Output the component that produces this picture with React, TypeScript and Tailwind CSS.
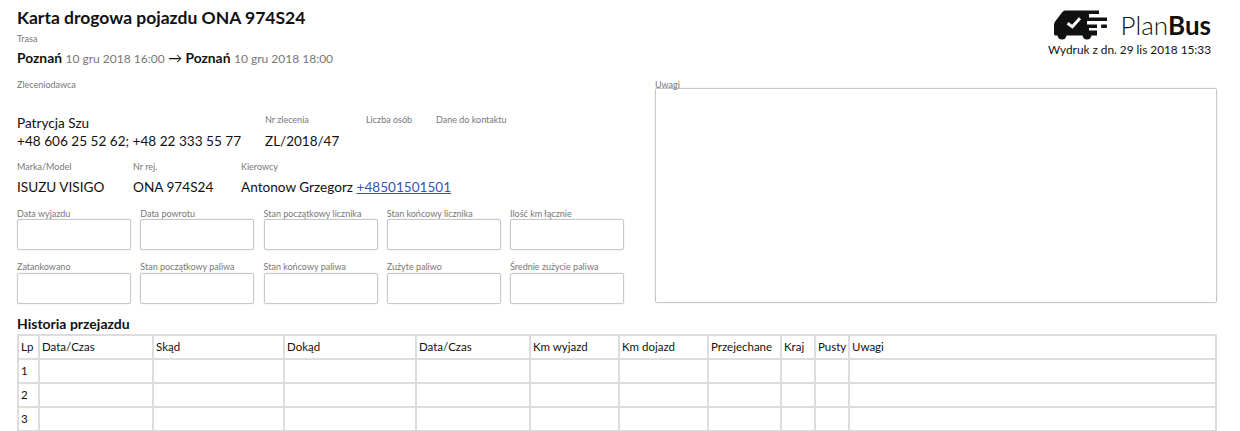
const columns = [
  { label: "Lp", width: "w-[21px]" },
  { label: "Data/Czas", width: "w-[114px]" },
  { label: "Skąd", width: "w-[131px]" },
  { label: "Dokąd", width: "w-[132px]" },
  { label: "Data/Czas", width: "w-[114px]" },
  { label: "Km wyjazd", width: "w-[89px]" },
  { label: "Km dojazd", width: "w-[89px]" },
  { label: "Przejechane", width: "w-[73px]" },
  { label: "Kraj", width: "w-[34px]" },
  { label: "Pusty", width: "w-[34px]" },
  { label: "Uwagi", width: "" },
];

const topFields = [
  "Data wyjazdu",
  "Data powrotu",
  "Stan początkowy licznika",
  "Stan końcowy licznika",
  "Ilość km łącznie",
];

const bottomFields = [
  "Zatankowano",
  "Stan początkowy paliwa",
  "Stan końcowy paliwa",
  "Zużyte paliwo",
  "Średnie zużycie paliwa",
];

function Logo() {
  return (
    <svg width="54" height="30" viewBox="0 0 54 30" className="block">
      <path
        d="M11 0.500 H45 V4 H35 V7.500 H53 V11 H33 V14.500 H43 V18 H35 V20.500 H43 V25.500 H1.500 Q0 25.500 0 24 V15 Q0 13 1.500 11 L8 2.500 Q9.500 0.500 11 0.500 Z"
        fill="#111"
      />
      <circle cx="8" cy="25" r="4.500" fill="#111" />
      <circle cx="33" cy="25" r="4.500" fill="#111" />
      <rect x="47" y="14.500" width="6" height="3.500" rx="1" fill="#111" />
      <path d="M13.500 13.300 L18.300 16.700 L26 8.300" fill="none" stroke="#fff" strokeWidth="3" />
    </svg>
  );
}

function Label({ children, className = "" }: { children: React.ReactNode; className?: string }) {
  return <div className={`text-[9px] leading-[11px] text-[#777] ${className}`}>{children}</div>;
}

function BoxField({ label, labelClass }: { label: string; labelClass: string }) {
  return (
    <div className="w-[114px] shrink-0">
      <Label className={labelClass}>{label}</Label>
      <div className="h-[31px] rounded-[2px] border border-[#c8c8c8] shadow-[0_0_1px_#bbb]" />
    </div>
  );
}

export default function App() {
  return (
    <div
      className="h-[431px] w-[1240px] overflow-hidden bg-white pl-[17px] pr-[23px] text-[#111]"
      style={{ fontFamily: "Lato, 'Liberation Sans', sans-serif" }}
    >
      <header className="flex h-[71px] justify-between">
        <div>
          <h1 className="pt-[7px] text-[17.500px] font-bold leading-[21px]">Karta drogowa pojazdu ONA 974S24</h1>
          <Label className="mt-[5px]">Trasa</Label>
          <p className="mt-[5px] text-[13.800px] leading-[18px]">
            <b>Poznań</b> <span className="text-[12px] text-[#777]">10 gru 2018 16:00</span> → <b>Poznań</b>{" "}
            <span className="text-[12px] text-[#777]">10 gru 2018 18:00</span>
          </p>
        </div>
        <div className="flex flex-col items-end pr-[6px] pt-[10px]">
          <div className="flex items-center gap-[13px]">
            <Logo />
            <div className="text-[26px] font-light leading-[29px]">
              Plan<span className="font-bold">Bus</span>
            </div>
          </div>
          <p className="mt-[3px] text-[11.800px] leading-[14px]">Wydruk z dn. 29 lis 2018 15:33</p>
        </div>
      </header>

      <div className="flex justify-between">
        <div className="w-[607px]">
          <div className="mt-[8px] flex">
            <div className="w-[248px]">
              <Label>Zleceniodawca</Label>
              <div className="mt-[24px] text-[13.600px] leading-[18px]">
                Patrycja Szu
                <br />
                +48 606 25 52 62; +48 22 333 55 77
              </div>
            </div>
            <div className="w-[101px] pt-[35px]">
              <Label>Nr zlecenia</Label>
              <div className="mt-[7px] text-[13.500px] leading-[18px]">ZL/2018/47</div>
            </div>
            <div className="w-[70px] pt-[35px]">
              <Label>Liczba osób</Label>
            </div>
            <div className="pt-[35px]">
              <Label>Dane do kontaktu</Label>
            </div>
          </div>

          <div className="mt-[11px] flex">
            <div className="w-[116px]">
              <Label>Marka/Model</Label>
              <div className="mt-[6px] text-[13.600px] leading-[18px]">ISUZU VISIGO</div>
            </div>
            <div className="w-[108px]">
              <Label>Nr rej.</Label>
              <div className="mt-[6px] text-[13.600px] leading-[18px]">ONA 974S24</div>
            </div>
            <div>
              <Label>Kierowcy</Label>
              <div className="mt-[6px] text-[13.600px] leading-[18px]">
                Antonow Grzegorz <span className="text-[#3f51b5] underline">+48501501501</span>
              </div>
            </div>
          </div>

          <div className="mt-[12px] flex gap-[9.250px]">
            {topFields.map((f) => (
              <BoxField key={f} label={f} labelClass="mb-0" />
            ))}
          </div>
          <div className="mt-[11px] flex gap-[9.250px]">
            {bottomFields.map((f) => (
              <BoxField key={f} label={f} labelClass="mb-[1px]" />
            ))}
          </div>
        </div>

        <div className="mt-[8px] w-[562px]">
          <Label className="mb-[-2px]">Uwagi</Label>
          <div className="h-[215px] rounded-[2px] border border-[#c8c8c8] shadow-[0_0_1px_#bbb]" />
        </div>
      </div>

      <h2 className="mt-[11px] text-[14px] font-bold leading-[17px]">Historia przejazdu</h2>
      <table className="mt-[2px] w-[1200px] table-fixed border-collapse text-[11.500px]">
        <thead>
          <tr>
            {columns.map((c, i) => (
              <td key={i} className={`h-[24px] border-2 border-[#ddd] px-[2px] py-0 ${c.width}`}>
                {c.label}
              </td>
            ))}
          </tr>
        </thead>
        <tbody>
          {[1, 2, 3].map((n) => (
            <tr key={n}>
              {columns.map((c, i) => (
                <td key={i} className="h-[24px] border-2 border-[#ddd] px-[2px] py-0">
                  {i === 0 ? n : ""}
                </td>
              ))}
            </tr>
          ))}
        </tbody>
      </table>
    </div>
  );
}
